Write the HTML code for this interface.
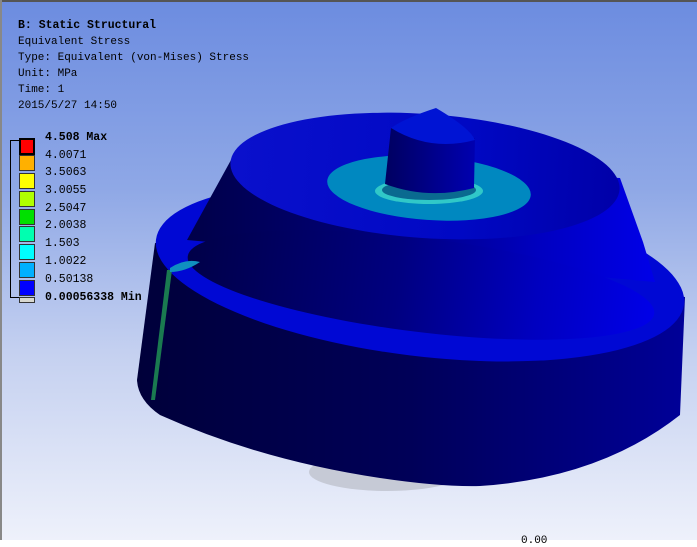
<!DOCTYPE html>
<html><head><style>
body{margin:0;width:697px;height:540px;overflow:hidden;position:relative;font-family:"Liberation Mono","Noto Sans CJK SC",monospace;}
.bg{position:absolute;left:0;top:0;width:697px;height:540px;background:linear-gradient(#6c8ce0 0%,#8fa8e6 35%,#c4d0f0 65%,#eef1fb 100%);}
svg{position:absolute;left:0;top:0}
.t{position:absolute;left:18px;font-size:11px;color:#000;white-space:nowrap;line-height:12px}
.l{position:absolute;left:45px;font-size:11.5px;color:#000;white-space:nowrap;line-height:12px}
.sw{position:absolute;left:19px;width:16px;height:16px;border:1px solid #333;box-sizing:border-box}
</style></head><body>
<div class="bg"></div>
<svg width="697" height="540">
<defs>
<linearGradient id="side" x1="0" x2="1"><stop offset="0" stop-color="#00003a"/><stop offset="0.5" stop-color="#000058"/><stop offset="1" stop-color="#000098"/></linearGradient>
<linearGradient id="cone" x1="0" x2="1"><stop offset="0" stop-color="#000048"/><stop offset="0.45" stop-color="#000080"/><stop offset="0.75" stop-color="#0000c0"/><stop offset="1" stop-color="#0000e8"/></linearGradient>
<linearGradient id="topf" x1="0" x2="1"><stop offset="0" stop-color="#0a10cc"/><stop offset="0.6" stop-color="#0008c4"/><stop offset="1" stop-color="#0000a8"/></linearGradient>
<linearGradient id="pin" x1="0" x2="1"><stop offset="0" stop-color="#000060"/><stop offset="1" stop-color="#0000b0"/></linearGradient>
</defs>
<rect x="0" y="0" width="697" height="2" fill="#555"/>
<rect x="0" y="0" width="2" height="540" fill="#888"/>
<ellipse cx="387" cy="472" rx="78" ry="19" fill="#c6cad6"/>
<path d="M155,243 L137,380 Q138,400 160,415 Q260,460 380,478 Q440,487 480,486 Q600,478 680,415 L685,297 Z" fill="url(#side)"/>
<ellipse cx="420" cy="272" rx="266" ry="84" transform="rotate(7 420 272)" fill="#0008d4"/>
<path d="M187,240 L231,160 L620,178 L643,242 L655,282 Z" fill="url(#cone)"/>
<ellipse cx="421" cy="285" rx="235" ry="47" transform="rotate(7 421 285)" fill="url(#cone)"/>
<ellipse cx="425" cy="176" rx="195" ry="62" transform="rotate(4 425 176)" fill="url(#topf)"/>
<ellipse cx="429" cy="188" rx="102" ry="32" transform="rotate(4 429 188)" fill="#0088c0"/>
<ellipse cx="429" cy="191" rx="54" ry="13" fill="#30c8c8"/>
<ellipse cx="429" cy="190" rx="47" ry="10" fill="#0a6a90"/>
<path d="M391,128 L385,184 Q428,200 474,188 L475,138 Z" fill="url(#pin)"/>
<path d="M391,128 Q405,118 436,108 Q470,128 475,140 Q430,152 391,128 Z" fill="#0014d4"/>
<path d="M167,270 L151,400 L155,400 L172,270 Z" fill="#1a7a50"/>
<path d="M170,268 Q185,258 200,262 Q185,272 170,272 Z" fill="#1090c0"/>
<rect x="10" y="140" width="1" height="158" fill="#000"/>
<rect x="10" y="140" width="9" height="1" fill="#000"/>
<rect x="10" y="297" width="9" height="1" fill="#000"/>
</svg>
<div class="t" style="top:20px;font-weight:bold;font-size:11.5px">B: Static Structural</div>
<div class="t" style="top:36px">Equivalent Stress</div>
<div class="t" style="top:52px">Type: Equivalent (von-Mises) Stress</div>
<div class="t" style="top:68px">Unit: MPa</div>
<div class="t" style="top:84px">Time: 1</div>
<div class="t" style="top:100px">2015/5/27 14:50</div>
<div class="sw" style="top:138px;height:17px;border:2px solid #000;background:#f00"></div>
<div class="sw" style="top:155px;background:#ffb000"></div>
<div class="sw" style="top:173px;background:#ffff00"></div>
<div class="sw" style="top:191px;background:#b0ff00"></div>
<div class="sw" style="top:209px;background:#00e000"></div>
<div class="sw" style="top:226px;background:#00ffb0"></div>
<div class="sw" style="top:244px;background:#00ffff"></div>
<div class="sw" style="top:262px;background:#00b0ff"></div>
<div class="sw" style="top:280px;background:#0000ff"></div>
<div class="sw" style="top:297px;height:6px;background:#d8d8d0"></div>
<div class="l" style="top:132px;font-weight:bold">4.508 Max</div>
<div class="l" style="top:150px">4.0071</div>
<div class="l" style="top:167px">3.5063</div>
<div class="l" style="top:185px">3.0055</div>
<div class="l" style="top:203px">2.5047</div>
<div class="l" style="top:220px">2.0038</div>
<div class="l" style="top:238px">1.503</div>
<div class="l" style="top:256px">1.0022</div>
<div class="l" style="top:274px">0.50138</div>
<div class="l" style="top:292px;font-weight:bold">0.00056338 Min</div>
<div class="t" style="left:521px;top:535px">0.00</div>
</body></html>
